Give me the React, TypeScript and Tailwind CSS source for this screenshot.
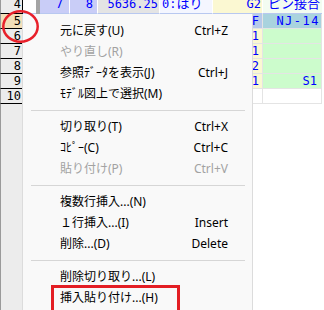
import React from 'react';

type MenuItem = { label: string; shortcut?: string; disabled?: boolean } | 'sep';

const menuItems: MenuItem[] = [
  { label: '元に戻す(U)', shortcut: 'Ctrl+Z' },
  { label: 'やり直し(R)', disabled: true },
  { label: '参照ﾃﾞｰﾀを表示(J)', shortcut: 'Ctrl+J' },
  { label: 'ﾓﾃﾞﾙ図上で選択(M)' },
  'sep',
  { label: '切り取り(T)', shortcut: 'Ctrl+X' },
  { label: 'ｺﾋﾟｰ(C)', shortcut: 'Ctrl+C' },
  { label: '貼り付け(P)', shortcut: 'Ctrl+V', disabled: true },
  'sep',
  { label: '複数行挿入...(N)' },
  { label: '１行挿入...(I)', shortcut: 'Insert' },
  { label: '削除...(D)', shortcut: 'Delete' },
  'sep',
  { label: '削除切り取り...(L)' },
  { label: '挿入貼り付け...(H)' },
];

// rows 5..10, only the two right columns show beside the menu
const rows = [
  { no: '5', sel: true, g: 'F', gBg: 'bg-[#b7c9ea]', h: 'NJ-14', hBg: 'bg-[#a9d3de]' },
  { no: '6', g: '1', gBg: 'bg-[#fbf8d2]', h: '', hBg: 'bg-[#ccfccc]' },
  { no: '7', g: '1', gBg: 'bg-[#fbf8d2]', h: '', hBg: 'bg-[#ccfccc]' },
  { no: '8', g: '2', gBg: 'bg-[#fbf8d2]', h: '', hBg: 'bg-[#ccfccc]' },
  { no: '9', g: '1', gBg: 'bg-[#fbf8d2]', h: 'S1', hBg: 'bg-[#ccfccc]' },
  { no: '10', g: '', gBg: 'bg-white', h: '', hBg: 'bg-white' },
];

const mono = "font-['DejaVu_Sans_Mono','Noto_Sans_CJK_JP',monospace] text-[12px] text-[#0000ff]";

const RowHeader: React.FC<{ label: string; sel?: boolean; top?: boolean }> = ({ label, sel, top }) => (
  <div
    className={`w-[23px] shrink-0 flex justify-end pr-[1px] overflow-hidden border-l border-l-[#9a9a9a] border-r border-r-black border-b border-b-black font-['DejaVu_Sans_Mono',monospace] text-[12px] text-black ${
      top ? 'items-end leading-[18px]' : 'items-center leading-[14px]'
    } ${sel ? 'bg-[#f2dfb9]' : 'bg-[#ececec]'}`}
  >
    {label}
  </div>
);

const App: React.FC = () => {
  return (
    <div className="relative w-[324px] h-[310px] overflow-hidden bg-white">
      <div className="flex flex-col h-full">
        {/* Row 4 (cut at the top) */}
        <div className={`flex h-[14px] ${mono} leading-[18px]`}>
          <RowHeader label="4" top />
          <div className="w-[13px] shrink-0 bg-white border-b border-[#b8c8f0]" />
          <div className="w-[4px] shrink-0 bg-[#a4a4a4]" />
          <div className="w-[30px] shrink-0 flex items-end justify-end pr-[6px] overflow-hidden bg-[#c9cdf7] border-r border-white border-b border-b-[#b8c8f0]">7</div>
          <div className="w-[28px] shrink-0 flex items-end justify-end pr-[4px] overflow-hidden bg-[#c9cdf7] border-r border-white border-b border-b-[#b8c8f0]">8</div>
          <div className="w-[62px] shrink-0 flex items-end justify-end pr-[1px] overflow-hidden bg-[#e4e4e4] border-r border-white border-b border-b-[#b8c8f0]">5636.25</div>
          <div className="w-[53px] shrink-0 flex items-end pl-[2px] overflow-hidden bg-[#f4f6ff] border-r border-white border-b border-b-[#b8c8f0] whitespace-nowrap">
            0:<span className="text-[13px]">はり</span>
          </div>
          <div className="w-[50px] shrink-0 flex items-end justify-end pr-[1px] overflow-hidden bg-[#fbf8d2] border-r border-white border-b border-b-[#b8c8f0]">G2</div>
          <div className="w-[59px] shrink-0 flex items-end justify-end pr-[2px] overflow-hidden bg-[#f3fcf1] text-[13px] border-b border-[#b8c8f0] whitespace-nowrap">ピン接合</div>
          <div className="flex-1 bg-white" />
        </div>

        {/* Rows 5..10 */}
        {rows.map((r) => (
          <div key={r.no} className={`flex h-[15px] ${mono} leading-[14px]`}>
            <RowHeader label={r.no} sel={r.sel} />
            <div className="w-[190px] shrink-0 bg-white" />
            <div className={`w-[50px] shrink-0 flex items-center justify-end pr-[3px] border-r border-b border-[#e4e4e4] ${r.gBg}`}>{r.g}</div>
            <div className={`w-[59px] shrink-0 flex items-center justify-end border-r border-b border-[#e4e4e4] ${r.h === 'NJ-14' ? 'pr-[1px] tracking-[1.5px]' : 'pr-[4px]'} ${r.hBg}`}>{r.h}</div>
            <div className="flex-1 bg-white" />
          </div>
        ))}

        {/* Empty area below the grid */}
        <div className="flex flex-1">
          <div className="w-[23px] shrink-0 border-l border-[#9a9a9a] bg-[#ececec]" />
          <div className="flex-1 bg-white" />
        </div>
      </div>

      {/* Context menu */}
      <div className="absolute left-[22px] top-[14px] w-[231px] h-[310px] bg-[#f9f9f9] border-l border-r border-[#dcdcdc] pt-[6px] font-['Noto_Sans','Noto_Sans_CJK_JP',sans-serif] text-[12px]">
        {menuItems.map((item, i) =>
          item === 'sep' ? (
            <div key={i} className="h-[12px] flex items-center ml-[8px] mr-[7px]">
              <div className="h-px w-full bg-[#d6d6d6]" />
            </div>
          ) : (
            <div
              key={i}
              className={`h-[21px] flex items-center pl-[37px] pr-[24px] whitespace-nowrap ${
                item.disabled ? 'text-[#a2a2a2]' : 'text-black'
              }`}
            >
              <span className="flex-1">{item.label}</span>
              {item.shortcut && <span>{item.shortcut}</span>}
            </div>
          )
        )}
      </div>

      {/* Red annotation circle */}
      <svg className="absolute left-[2px] top-[10px]" width="38" height="34" viewBox="0 0 38 34">
        <ellipse cx="18.5" cy="16.5" rx="17.2" ry="15.2" fill="none" stroke="#e8202a" strokeWidth="2.5" />
      </svg>

      {/* Red annotation box */}
      <div className="absolute left-[51px] top-[285px] w-[129px] h-[30px] border-[3px] border-[#e31e24]" />
    </div>
  );
};

export default App;
